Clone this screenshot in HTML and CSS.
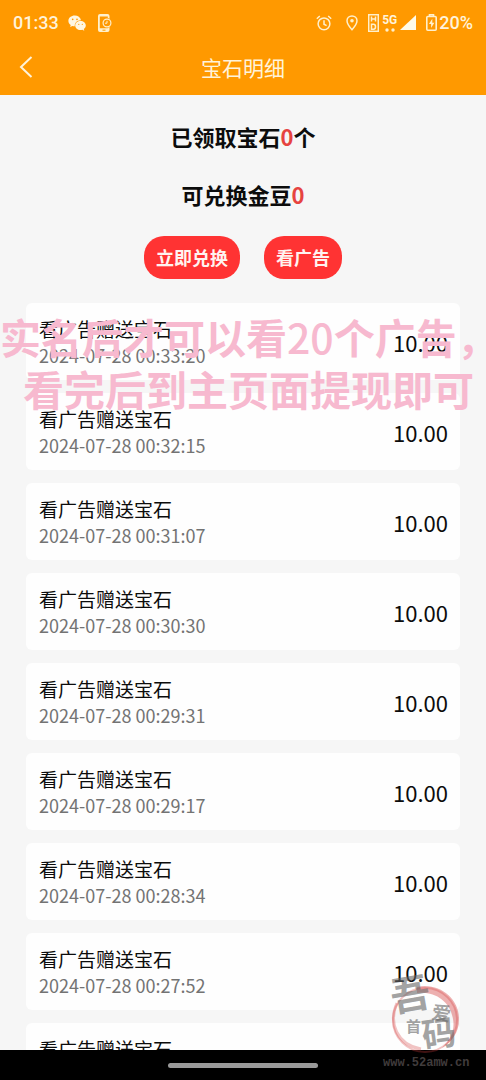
FILE: index.html
```html
<!DOCTYPE html>
<html lang="zh-CN">
<head>
<meta charset="utf-8">
<meta name="viewport" content="width=device-width, initial-scale=1">
<title>宝石明细</title>
<link rel="stylesheet" href="styles.css">
</head>
<body>
<div class="app">
  <header class="header">
    <div class="status">
      <span class="status-time">01:33</span>
      <svg class="icon-wechat" width="18" height="16" viewBox="0 0 18 16" aria-hidden="true">
        <path fill="#fff6e0" d="M6.800.5C3.200.5.4 2.900.4 5.900c0 1.700.9 3.200 2.300 4.200L2.200 12l2.200-1.100c.7.2 1.500.4 2.400.4C6.400 8 9 5.200 13 5.200 12.400 2.400 9.900.5 6.800.5z"/>
        <path fill="#fff6e0" d="M12.500 6c-3 0-5.300 2-5.300 4.500s2.300 4.500 5.300 4.500c.6 0 1.200-.1 1.800-.3l2 1-.5-1.700c1.200-.8 2-2.100 2-3.500C17.800 8 15.500 6 12.500 6z"/>
        <g fill="#ff9900"><circle cx="4.700" cy="4.400" r=".8"/><circle cx="9" cy="4.400" r=".8"/><circle cx="10.800" cy="9.300" r=".6"/><circle cx="14.300" cy="9.300" r=".6"/></g>
      </svg>
      <svg class="icon-phone" width="14" height="18" viewBox="0 0 14 18" aria-hidden="true">
        <path fill="#fff0cc" fill-rule="evenodd" d="M2 0h7.500a2 2 0 0 1 2 2v14a2 2 0 0 1-2 2H2a2 2 0 0 1-2-2V2a2 2 0 0 1 2-2zm-.2 2.500v11.800h8V2.500z"/>
        <circle cx="9" cy="9" r="5" fill="#ff9900"/>
        <circle cx="9" cy="9" r="3.900" fill="none" stroke="#fff0cc" stroke-width="1.200"/>
        <path d="M4.500 16.200h3" fill="none" stroke="#ff9900" stroke-width="1"/>
        <path d="M9 6.800V9.200H7" fill="none" stroke="#fff0cc" stroke-width="1"/>
      </svg>
      <div class="status-right">
        <svg width="16" height="16" viewBox="0 0 16 16" fill="none" stroke="#fff0cc" stroke-width="1.500" aria-hidden="true">
          <circle cx="8" cy="8.800" r="5.900"/><path d="M8 5.200v4l2.600 1.400M.8 3.700 3.800 1M15.200 3.700 12.200 1"/>
        </svg>
        <svg class="icon-pin" width="12" height="16" viewBox="0 0 12 16" aria-hidden="true">
          <path d="M6 1C3.200 1 1 3.100 1 5.800c0 3.400 5 8.900 5 8.900s5-5.500 5-8.900C11 3.100 8.800 1 6 1z" fill="none" stroke="#fff0cc" stroke-width="1.500"/><circle cx="6" cy="5.800" r="1.800" fill="#fff0cc"/>
        </svg>
        <svg class="icon-hd" width="11" height="18" viewBox="0 0 11 18" fill="none" stroke="#fff0cc" stroke-width="1.500" aria-hidden="true">
          <rect x=".7" y=".7" width="9.600" height="16.600"/><path d="M3.500 2.600v5M7.500 2.600v5M3.500 5.100h4M3.500 10.300v5h2q2 0 2-2.500t-2-2.500z"/>
        </svg>
        <span class="network"><span>5G</span><svg width="10" height="4" viewBox="0 0 10 4" aria-hidden="true"><circle cx="2" cy="2" r="1.700" fill="#fff0cc"/><circle cx="8" cy="2" r="1.700" fill="#fff0cc"/></svg></span>
        <svg class="icon-signal" width="16" height="15" viewBox="0 0 16 15" aria-hidden="true"><path d="M16 0v15H0z" fill="#fffbe8"/></svg>
        <svg class="icon-battery" width="11" height="17" viewBox="0 0 11 17" aria-hidden="true">
          <path d="M3.500 2V.8h4V2M1.800 2.500h7.400q1 0 1 1v11.700q0 1-1 1H1.800q-1 0-1-1V3.500q0-1 1-1z" fill="none" stroke="#fff0cc" stroke-width="1.600"/><path d="M6.300 4.800 2.900 10h2.200v4L8.400 8.700H6.300z" fill="#fff0cc"/>
        </svg>
        <span class="battery-level">20%</span>
      </div>
    </div>
    <div class="titlebar">
      <button class="back" type="button" aria-label="返回">
        <svg width="14" height="22" viewBox="0 0 14 22" fill="none" stroke="#fff3da" stroke-width="2" aria-hidden="true"><path d="M12.500 1 2 11l10.500 10"/></svg>
      </button>
      <h1 class="title">宝石明细</h1>
    </div>
  </header>

  <main class="content">
    <section class="summary">
      <p class="total">已领取宝石<span class="count">0</span>个</p>
      <p class="total">可兑换金豆<span class="count">0</span></p>
      <div class="actions">
        <button class="action" type="button">立即兑换</button>
        <button class="action" type="button">看广告</button>
      </div>
    </section>
    <ul class="records">
      <li class="record"><div class="info"><span class="name">看广告赠送宝石</span><time class="date">2024-07-28 00:33:20</time></div><span class="amount">10.00</span></li>
      <li class="record"><div class="info"><span class="name">看广告赠送宝石</span><time class="date">2024-07-28 00:32:15</time></div><span class="amount">10.00</span></li>
      <li class="record"><div class="info"><span class="name">看广告赠送宝石</span><time class="date">2024-07-28 00:31:07</time></div><span class="amount">10.00</span></li>
      <li class="record"><div class="info"><span class="name">看广告赠送宝石</span><time class="date">2024-07-28 00:30:30</time></div><span class="amount">10.00</span></li>
      <li class="record"><div class="info"><span class="name">看广告赠送宝石</span><time class="date">2024-07-28 00:29:31</time></div><span class="amount">10.00</span></li>
      <li class="record"><div class="info"><span class="name">看广告赠送宝石</span><time class="date">2024-07-28 00:29:17</time></div><span class="amount">10.00</span></li>
      <li class="record"><div class="info"><span class="name">看广告赠送宝石</span><time class="date">2024-07-28 00:28:34</time></div><span class="amount">10.00</span></li>
      <li class="record"><div class="info"><span class="name">看广告赠送宝石</span><time class="date">2024-07-28 00:27:52</time></div><span class="amount">10.00</span></li>
      <li class="record"><div class="info"><span class="name">看广告赠送宝石</span></div></li>
    </ul>
  </main>

  <footer class="navbar"><span class="handle"></span></footer>

  <p class="caption"><span>实名后才可以看<span class="caption-number">20</span>个广告，</span><span class="caption-second">看完后到主页面提现即可</span></p>

  <svg class="stamp" width="92" height="110" viewBox="0 -6 92 110" role="img" aria-label="吾爱首码 www.52amw.cn">
    <g fill="none">
      <circle cx="46" cy="52" r="32" stroke="#d43c3c" stroke-opacity=".3" stroke-width="2"/>
      <path d="M38 19c22-5 43 12 42 33 0 12-7 22-17 28 9-9 13-18 11-29C71 33 56 23 38 25z" fill="#d43c3c" fill-opacity=".4"/>
      <path d="M18 35c-9 20 0 42 24 46" stroke="#d43c3c" stroke-opacity=".3" stroke-width="3"/>
    </g>
    <g class="stamp-ink">
      <text x="11" y="41" font-size="40" transform="rotate(-10 31 25)">吾</text>
      <text x="27" y="64" font-size="15">首</text>
      <text x="53" y="52" font-size="19" transform="rotate(8 62 44)">爱</text>
      <text x="43" y="78" font-size="34" transform="rotate(-8 60 66)">码</text>
    </g>
    <text class="stamp-url" x="4" y="98">www.52amw.cn</text>
  </svg>
</div>
</body>
</html>
```
FILE: styles.css
```css
* {
  box-sizing: border-box;
}

body,
h1,
p,
ul {
  margin: 0;
  padding: 0;
}

body {
  font-family: "Noto Sans CJK SC", sans-serif;
  color: #0c0c0c;
  background: #f6f6f6;
}

button {
  border: 0;
  font: inherit;
  cursor: pointer;
}

.app {
  position: relative;
  display: flex;
  flex-direction: column;
  height: 100vh;
  overflow: hidden;
}

.header {
  flex: none;
  background: #ff9900;
  color: #fff3da;
}

.status {
  display: flex;
  align-items: center;
  height: 45px;
  padding: 0 13px;
  font-family: Roboto, sans-serif;
  font-size: 18px;
  font-weight: 500;
}

.icon-wechat {
  margin-left: 9px;
}

.icon-phone {
  margin-left: 12px;
}

.status-right {
  display: flex;
  align-items: center;
  margin-left: auto;
}

.icon-pin {
  margin-left: 14px;
}

.icon-hd {
  margin-left: 10px;
}

.network {
  display: flex;
  flex-direction: column;
  align-items: center;
  gap: 2px;
  margin-left: 3px;
  font-size: 12px;
  font-weight: 700;
  line-height: 12px;
}

.icon-signal {
  margin-left: 3px;
}

.icon-battery {
  margin-left: 10px;
}

.battery-level {
  margin-left: 2px;
}

.titlebar {
  display: grid;
  grid-template-columns: 50px 1fr 50px;
  align-items: center;
  height: 50px;
  padding-bottom: 6px;
}

.back {
  display: flex;
  padding: 0 0 0 19px;
  background: none;
}

.title {
  font-size: 21px;
  font-weight: 400;
  line-height: 30px;
  text-align: center;
}

.content {
  flex: 1;
  min-height: 0;
  overflow: hidden;
  padding: 25px 26px 0;
}

.summary {
  display: flex;
  flex-direction: column;
  align-items: center;
  gap: 26px;
  margin-bottom: 24px;
}

.total {
  font-size: 22px;
  font-weight: 700;
  line-height: 32px;
}

.count {
  color: #e64340;
}

.actions {
  display: flex;
  gap: 24px;
}

.action {
  padding: 0 12px;
  border-radius: 20px;
  background: #ff3333;
  color: #fff3f0;
  font-size: 18px;
  font-weight: 700;
  line-height: 43px;
}

.records {
  display: flex;
  flex-direction: column;
  gap: 13px;
  list-style: none;
}

.record {
  display: flex;
  align-items: center;
  justify-content: space-between;
  padding: 13px 12px 12px 13px;
  border-radius: 6px;
  background: #fefefe;
}

.info {
  display: flex;
  flex-direction: column;
  line-height: 26px;
}

.name {
  font-size: 19px;
}

.date {
  color: #737373;
  font-size: 18px;
}

.amount {
  font-size: 22px;
  line-height: 28px;
}

.navbar {
  display: flex;
  flex: none;
  align-items: center;
  justify-content: center;
  height: 30px;
  background: #000;
}

.handle {
  width: 31%;
  height: 5px;
  border-radius: 3px;
  background: #999;
}

.caption {
  position: absolute;
  top: 310px;
  left: 0;
  display: flex;
  flex-direction: column;
  color: #f7b9cf;
  font-size: 41px;
  font-weight: 700;
  line-height: 52px;
  white-space: nowrap;
}

.caption-number {
  font-weight: 500;
}

.caption-second {
  padding-left: 23px;
}

.stamp {
  position: absolute;
  right: 15px;
  bottom: 8px;
}

.stamp-ink {
  fill: #666;
  fill-opacity: 0.6;
  font-weight: 700;
}

.stamp-url {
  fill: #403c3c;
  font-family: "Liberation Mono", monospace;
  font-size: 12px;
  font-weight: 700;
}
```
